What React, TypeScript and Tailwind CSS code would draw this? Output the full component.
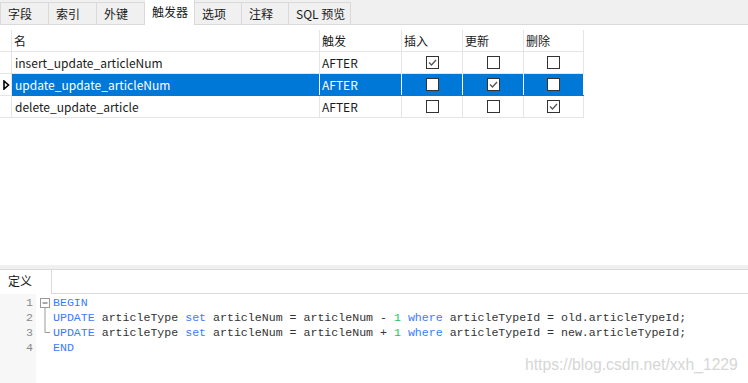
import React from 'react';

const ui = "font-['Noto_Sans_CJK_SC','Noto_Sans',sans-serif]";

const tabs = [
  { label: '字段', w: 'w-[49px]' },
  { label: '索引', w: 'w-[48px]' },
  { label: '外键', w: 'w-[48px]' },
  { label: '触发器', w: 'w-[50px]', active: true },
  { label: '选项', w: 'w-[47px]' },
  { label: '注释', w: 'w-[47px]' },
  { label: 'SQL 预览', w: 'w-[62px]' },
];

const rows = [
  { name: 'insert_update_articleNum', ins: true, upd: false, del: false },
  { name: 'update_update_articleNum', ins: false, upd: true, del: false, selected: true },
  { name: 'delete_update_article', ins: false, upd: false, del: true },
];

function Box({ checked }: { checked: boolean }) {
  return (
    <span className="flex h-[13px] w-[13px] items-center justify-center border border-[#333] bg-white">
      {checked && (
        <svg width="11" height="11" viewBox="0 0 11 11">
          <polyline points="2,5.5 4.5,8 9,3" fill="none" stroke="#555" strokeWidth="1.3" />
        </svg>
      )}
    </span>
  );
}

function Arrow() {
  return (
    <svg width="8" height="10" viewBox="0 0 8 10">
      <polygon points="2,1 6.5,5 2,9" fill="white" stroke="black" strokeWidth="1.6" strokeLinejoin="miter" />
    </svg>
  );
}

const kw = 'text-[#3b7cff]';
const num = 'text-[#22c55e]';

function CodeLine({ sign, src }: { sign: string; src: string }) {
  return (
    <div className="whitespace-pre">
      <span className={kw}>UPDATE</span> articleType <span className={kw}>set</span> articleNum = articleNum {sign}{' '}
      <span className={num}>1</span> <span className={kw}>where</span> articleTypeId = {src}.articleTypeId;
    </div>
  );
}

export default function App() {
  return (
    <div className={`relative flex h-[383px] w-[748px] flex-col overflow-hidden bg-white text-[12px] text-[#1a1a1a] ${ui}`}>
      {/* top tab strip */}
      <div className="flex h-[25px] bg-[#f0f0f0]">
        {tabs.map((t, i) =>
          t.active ? (
            <div key={t.label} className={`${t.w} h-[25px] border-r border-[#d9d9d9] bg-white pl-[7px] pt-[3px] leading-[17px]`}>
              {t.label}
            </div>
          ) : (
            <div
              key={t.label}
              className={`${t.w} mt-[2px] h-[23px] border-t border-r border-b border-[#d9d9d9] pl-[7px] pt-[2px] leading-[17px] ${i === 0 ? 'border-l' : ''}`}
            >
              {t.label}
            </div>
          ),
        )}
        <div className="h-[25px] flex-1 border-b border-[#d9d9d9]" />
      </div>

      {/* grid */}
      <div className="pt-[5px]">
        <div className="flex h-[22px] w-[584px] border-b border-[#e5e5e5] leading-[21px]">
          <div className="w-[12px] border-r border-[#e5e5e5]" />
          <div className="w-[308px] border-r border-[#e5e5e5] pl-[2px]">名</div>
          <div className="w-[82px] border-r border-[#e5e5e5] pl-[2px]">触发</div>
          <div className="w-[61px] border-r border-[#e5e5e5] pl-[2px]">插入</div>
          <div className="w-[61px] border-r border-[#e5e5e5] pl-[2px]">更新</div>
          <div className="w-[60px] border-r border-[#e5e5e5] pl-[2px]">删除</div>
        </div>
        {rows.map((r) => {
          const sel = r.selected;
          const cell = sel ? 'border-r border-white' : 'border-r border-[#e5e5e5]';
          return (
            <div key={r.name} className="flex h-[22px] w-[584px] leading-[21px]">
              <div className="flex w-[12px] items-center justify-center border-r border-b border-[#e5e5e5] bg-white">
                {sel && <Arrow />}
              </div>
              <div className={`flex flex-1 border-b ${sel ? 'border-[#0078d7] bg-[#0078d7] text-white' : 'border-[#e5e5e5]'}`}>
                <div className={`w-[308px] pl-[3px] ${cell}`}>{r.name}</div>
                <div className={`w-[82px] pl-[2px] ${cell}`}>AFTER</div>
                <div className={`flex w-[61px] items-center justify-center ${cell}`}>
                  <Box checked={r.ins} />
                </div>
                <div className={`flex w-[61px] items-center justify-center ${cell}`}>
                  <Box checked={r.upd} />
                </div>
                <div className={`flex w-[60px] items-center justify-center ${cell}`}>
                  <Box checked={r.del} />
                </div>
              </div>
            </div>
          );
        })}
      </div>

      <div className="flex-1" />

      {/* definition panel */}
      <div className="h-[4px] bg-[#f0f0f0]" />
      <div className="flex h-[25px] border-t border-[#dadada]">
        <div className="w-[52px] border-r border-[#dadada] pl-[8px] leading-[22px]">定义</div>
        <div className="flex-1 border-b border-[#dadada]" />
      </div>
      <div className="flex h-[89px] font-['Liberation_Mono',monospace] text-[11.6px] leading-[15px]">
        <div className="w-[36px] bg-[#f7f7f7] pr-[3px] pt-[1px] text-right text-[#8a8a8a]">
          <div>1</div>
          <div>2</div>
          <div>3</div>
          <div>4</div>
        </div>
        <div className="w-[17px] pt-[1px]">
          <svg width="17" height="60" viewBox="0 0 17 60">
            <rect x="4.5" y="3.5" width="9" height="9" fill="white" stroke="#9a9a9a" />
            <line x1="6.5" y1="8" x2="11.5" y2="8" stroke="#555" />
            <line x1="9" y1="12.5" x2="9" y2="37.5" stroke="#9a9a9a" />
            <line x1="9" y1="37.5" x2="14" y2="37.5" stroke="#9a9a9a" />
          </svg>
        </div>
        <div className="pt-[1px] text-[#333]">
          <div className={kw}>BEGIN</div>
          <CodeLine sign="-" src="old" />
          <CodeLine sign="+" src="new" />
          <div className={kw}>END</div>
        </div>
      </div>

      <div className="pointer-events-none absolute left-[525px] top-[357px] font-['Liberation_Sans',sans-serif] text-[15.7px] leading-none text-[#d6d6d6]">
        https://blog.csdn.net/xxh_1229
      </div>
    </div>
  );
}
